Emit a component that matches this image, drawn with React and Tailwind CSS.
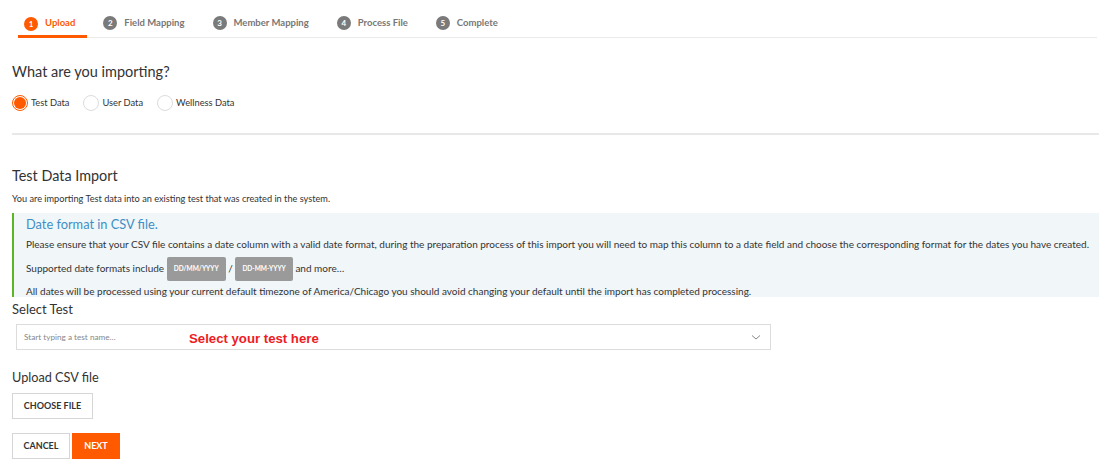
import React, { useState } from "react";

const steps = ["Upload", "Field Mapping", "Member Mapping", "Process File", "Complete"];

const Radio = ({ label, checked, onClick }) => (
  <label className="flex items-center gap-[3px] cursor-pointer" onClick={onClick}>
    <span
      className={
        "w-[16px] h-[16px] rounded-full border flex items-center justify-center " +
        (checked ? "border-[#ff5a00]" : "border-[#dcdcdc]")
      }
    >
      {checked && <span className="w-[12px] h-[12px] rounded-full bg-[#ff5a00]" />}
    </span>
    <span className="text-[9.3px] text-[#333]">{label}</span>
  </label>
);

const Chip = ({ children }) => (
  <span className="inline-block bg-[#9a9a9a] text-white text-[6.5px] font-bold px-[7px] py-[4px] rounded-[2px] align-middle">
    {children}
  </span>
);

export default function App() {
  const [kind, setKind] = useState("test");

  return (
    <div className="w-[1099px] h-[468px] bg-white overflow-hidden text-[#333]" style={{ fontFamily: "Lato, 'Noto Sans', sans-serif" }}>
      <div className="pl-[18px] pt-[12px]">
        <div className="flex items-end gap-[10px] border-b border-[#ebebeb] mr-[2px]">
          {steps.map((s, i) => {
            const active = i === 0;
            return (
              <div
                key={s}
                className={
                  "flex items-center gap-[7px] h-[24px] pb-[2px] pl-[6px] pr-[12px] " +
                  (active ? "border-b-[3px] border-[#ff5a00] mb-[-1px]" : "mb-[1px]")
                }
              >
                <span
                  className={
                    "w-[14px] h-[14px] rounded-full text-white text-[8px] font-bold flex items-center justify-center " +
                    (active ? "bg-[#ff5a00]" : "bg-[#7a7a7a]")
                  }
                >
                  {i + 1}
                </span>
                <span className={"text-[9.5px] font-bold " + (active ? "text-[#ff5a00]" : "text-[#777]")}>{s}</span>
              </div>
            );
          })}
        </div>
      </div>

      <div className="pl-[12px]">
        <h2 className="text-[14.5px] mt-[24px] leading-[20px]">What are you importing?</h2>
        <div className="flex gap-[14px] mt-[13px]">
          <Radio label="Test Data" checked={kind === "test"} onClick={() => setKind("test")} />
          <Radio label="User Data" checked={kind === "user"} onClick={() => setKind("user")} />
          <Radio label="Wellness Data" checked={kind === "wellness"} onClick={() => setKind("wellness")} />
        </div>

        <div className="h-[2px] bg-[#e8e8e8] mt-[22px]" />

        <h2 className="text-[14.4px] mt-[31px] leading-[20px]">Test Data Import</h2>
        <p className="text-[9.2px] mt-[7px] leading-[12px]">You are importing Test data into an existing test that was created in the system.</p>

        <div className="mt-[8px] bg-[#f1f6f9] border-l-[2px] border-[#5db526] pl-[12px] pt-[2px] pb-0">
          <div className="text-[12.8px] text-[#3d8fc6] leading-[18px]">Date format in CSV file.</div>
          <p className="text-[10px] mt-[5px] leading-[12px]">
            Please ensure that your CSV file contains a date column with a valid date format, during the preparation process of this import you will need to map this column to a date field and choose the corresponding format for the dates you have created.
          </p>
          <p className="text-[10px] mt-[7px] leading-[16px]">
            Supported date formats include <Chip>DD/MM/YYYY</Chip> / <Chip>DD-MM-YYYY</Chip> and more…
          </p>
          <p className="text-[10px] mt-[4px] leading-[12px]">
            All dates will be processed using your current default timezone of America/Chicago you should avoid changing your default until the import has completed processing.
          </p>
        </div>

        <h3 className="text-[13px] leading-[16px] mt-[4px]">Select Test</h3>
        <div className="relative mt-[7px] ml-[4px] w-[755px] h-[26px] border border-[#dcdcdc] flex items-center px-[7px]">
          <span className="text-[8.2px] text-[#888]">Start typing a test name…</span>
          <span
            className="absolute left-[172px] top-[4px] text-[13.2px] font-bold text-[#ee1c25]"
            style={{ fontFamily: "'Liberation Sans', Arial, sans-serif" }}
          >
            Select your test here
          </span>
          <svg className="absolute right-[9px] top-[9px]" width="10" height="7" viewBox="0 0 10 7">
            <path d="M1 1.5 L5 5 L9 1.5" fill="none" stroke="#888" strokeWidth="1" />
          </svg>
        </div>

        <h3 className="text-[12.7px] leading-[16px] mt-[19px]">Upload CSV file</h3>
        <button className="mt-[8px] h-[26px] w-[81px] border border-[#d6d6d6] bg-white text-[9px] font-bold text-[#333] block">
          CHOOSE FILE
        </button>
        <div className="flex gap-[2px] mt-[14px]">
          <button className="h-[26px] w-[58px] border border-[#d6d6d6] bg-white text-[9px] font-bold text-[#333]">CANCEL</button>
          <button className="h-[26px] w-[48px] bg-[#ff5a00] text-[9px] font-bold text-white">NEXT</button>
        </div>
      </div>
    </div>
  );
}
